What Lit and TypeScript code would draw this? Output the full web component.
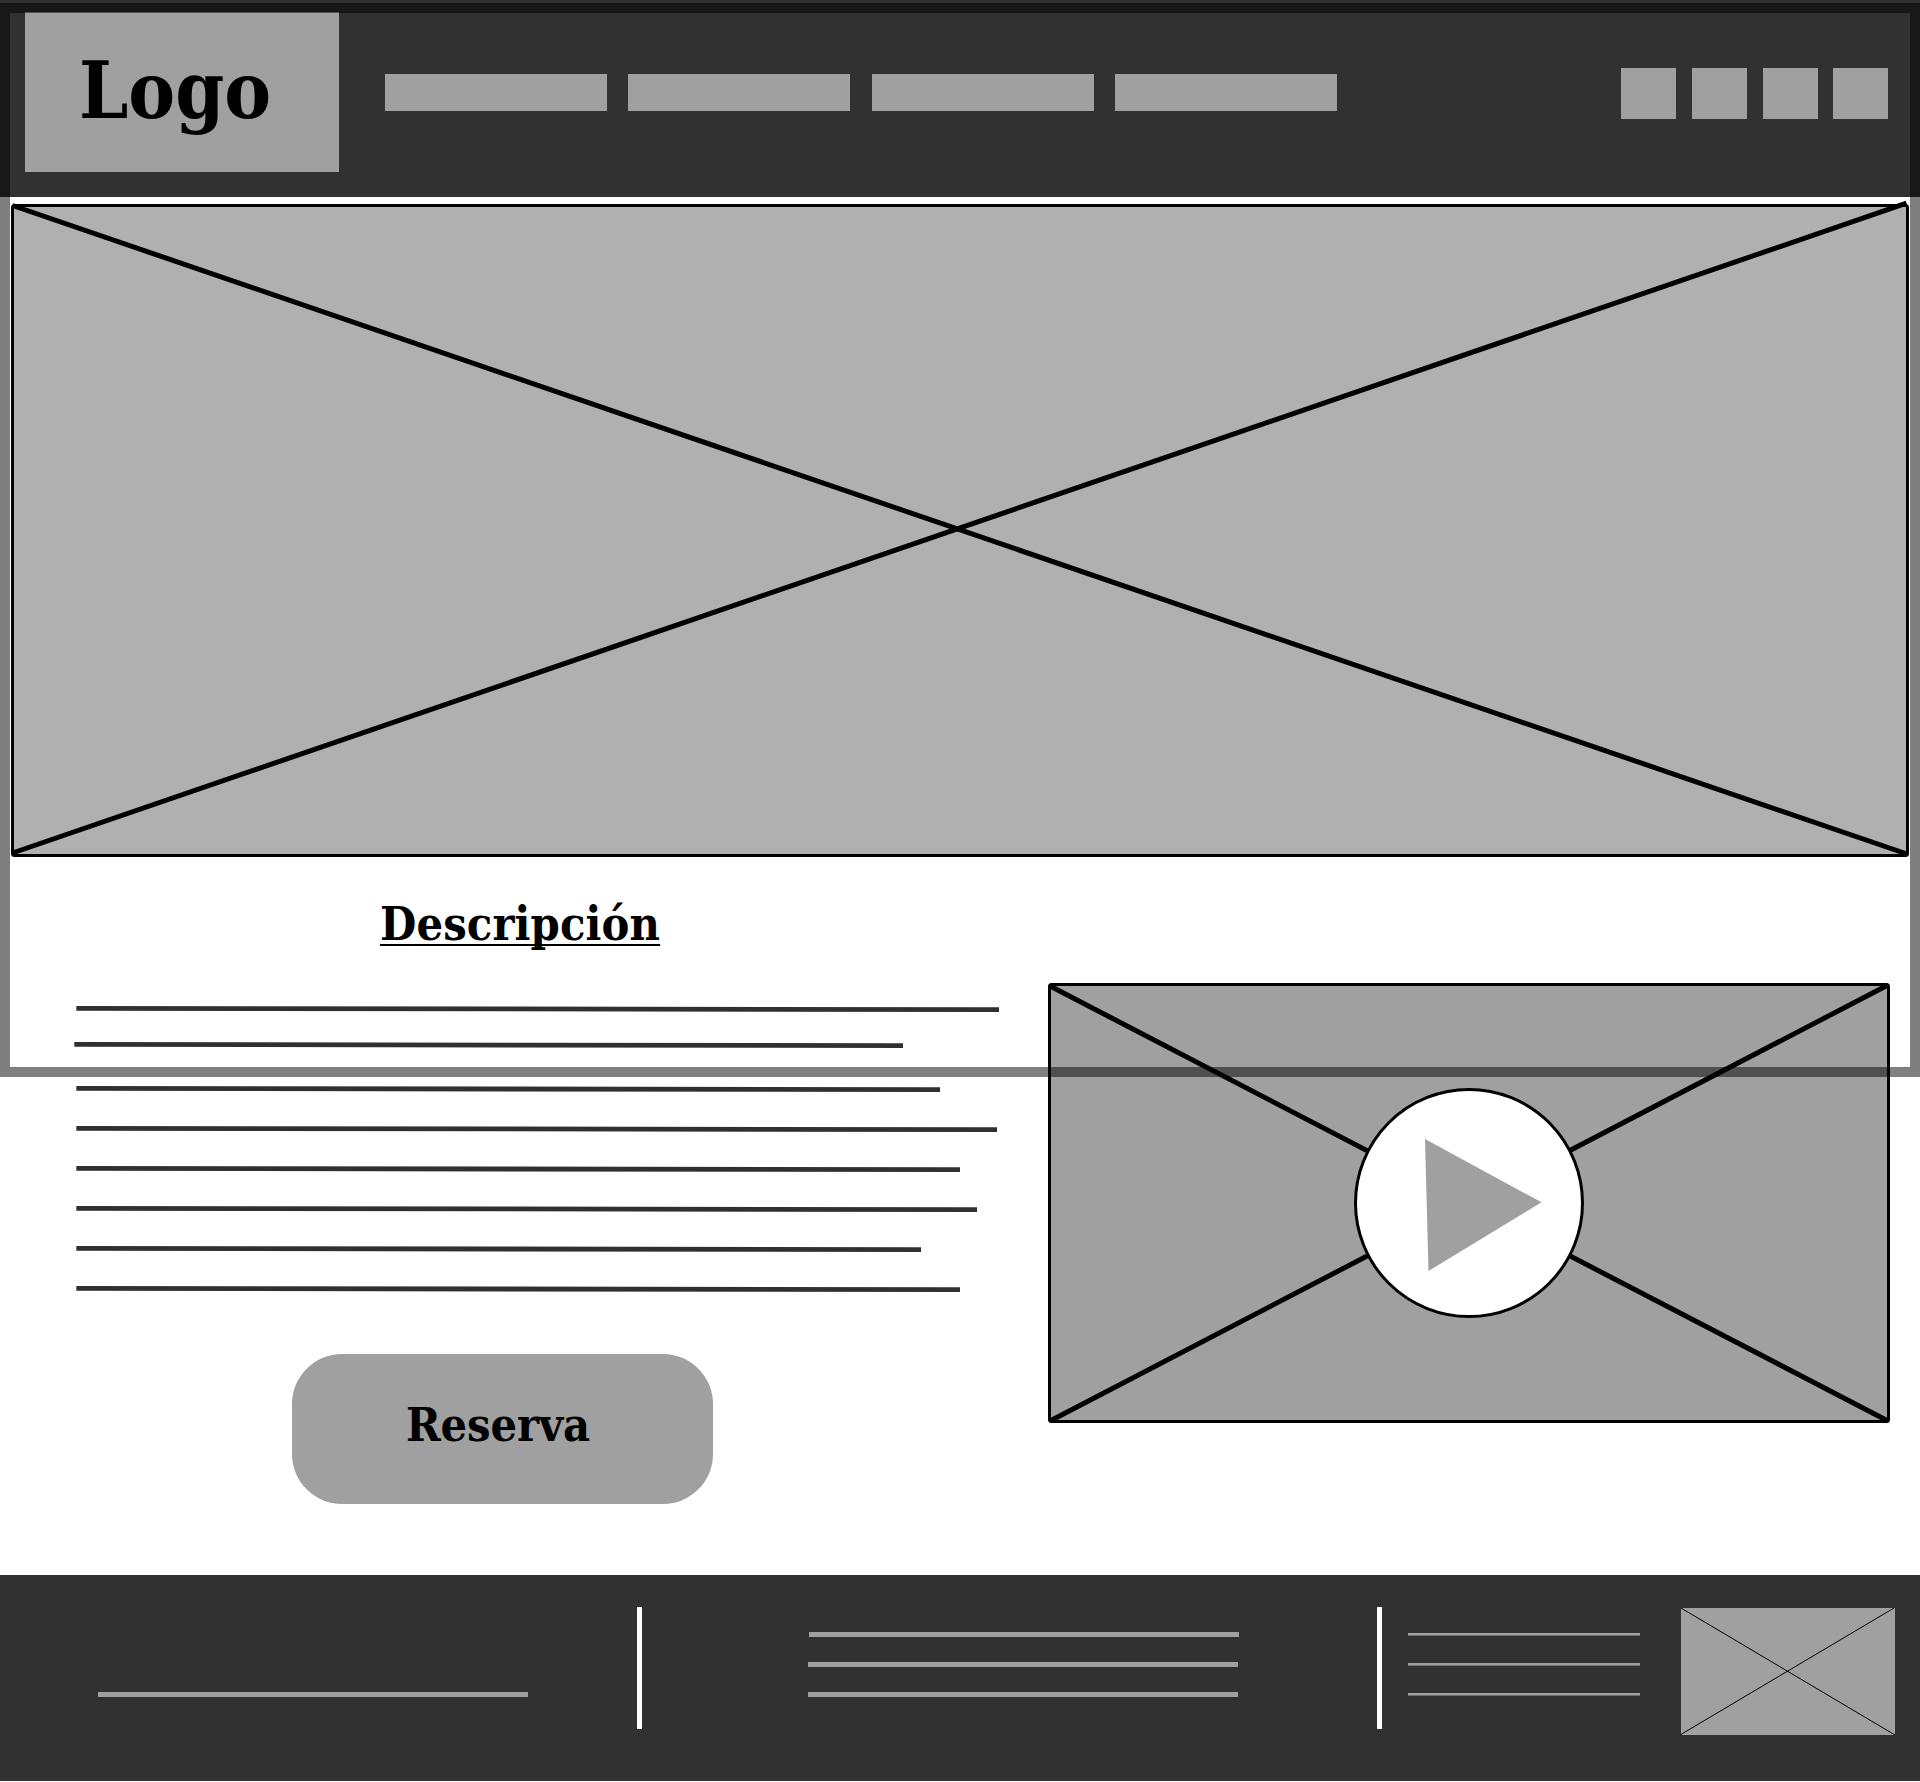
import { LitElement, html, css } from "lit";
import { customElement } from "lit/decorators.js";

const textLines = [
  { left: 76, width: 923, gap: 31 },
  { left: 74, width: 829, gap: 39 },
  { left: 76, width: 864, gap: 35 },
  { left: 76, width: 921, gap: 35 },
  { left: 76, width: 884, gap: 35 },
  { left: 76, width: 901, gap: 35 },
  { left: 76, width: 845, gap: 35 },
  { left: 76, width: 884, gap: 0 },
];

@customElement("app-root")
export class AppRoot extends LitElement {
  static styles = css`
    :host {
      display: block;
      position: relative;
      width: 1920px;
      height: 1782px;
      background: #fff;
      overflow: hidden;
      color: #000;
      font-family: "DejaVu Serif Condensed", "DejaVu Serif", serif;
      font-stretch: semi-condensed;
      font-weight: 700;
    }
    * { box-sizing: border-box; }
    svg { display: block; overflow: visible; }
    header {
      display: flex;
      height: 197px;
      padding: 12px 32px 0 25px;
      background: #313131;
    }
    .logo {
      width: 314px;
      height: 160px;
      background: #a0a0a0;
      padding: 29px 0 0 54px;
      font-size: 78px;
      line-height: 100px;
    }
    nav { display: flex; gap: 21.4px; margin: 62px 0 0 46px; }
    .link { width: 222px; height: 37px; background: #a0a0a0; }
    .socials { display: flex; gap: 16px; margin: 56px 0 0 auto; }
    .social { width: 55px; height: 51px; background: #a0a0a0; }
    .social:last-child { margin-left: -1px; }
    .hero { height: 653px; margin: 7px 0 0 11px; width: 1898px; }
    .main { display: flex; height: 718px; }
    .about { width: 1048px; }
    h1 {
      margin: 37px 0 0 380px;
      width: 281px;
      height: 60px;
      font-size: 46.5px;
      line-height: 60px;
      letter-spacing: 0.12px;
      white-space: nowrap;
      text-decoration: underline;
      text-decoration-thickness: 2px;
      text-underline-offset: 4px;
      text-decoration-skip-ink: none;
    }
    .lines { padding-top: 52px; }
    .reserve {
      display: block;
      width: 421px;
      height: 150px;
      margin: 63px 0 0 292px;
      padding: 0 0 10px 114px;
      border: 0;
      border-radius: 50px;
      background: #a0a0a0;
      color: #000;
      font: inherit;
      font-size: 46.5px;
      letter-spacing: -0.15px;
      text-align: left;
    }
    .video { margin-top: 126px; width: 842px; height: 440px; }
    footer {
      display: flex;
      align-items: flex-start;
      height: 206px;
      padding-top: 32px;
      background: #313131;
    }
    .col { display: flex; flex-direction: column; gap: 25px; width: 430px; }
    .rule { height: 5px; background: #a0a0a0; }
    .rule.top { margin-left: 1px; margin-right: -1px; }
    .first { margin: 85px 0 0 98px; }
    .second { margin: 25px 0 0 166px; }
    .third { margin: 26px 0 0 26px; width: 232px; gap: 27px; }
    .third .rule { height: 3px; border-bottom: 1px solid #707070; }
    .divider { width: 5px; height: 122px; background: #fff; }
    .d1 { margin-left: 109px; }
    .d2 { margin-left: 139px; }
    .thumb { margin: 1px 0 0 41px; }
    .frame {
      position: absolute;
      inset: 3px 0 auto 0;
      height: 1074px;
      border: 10px solid rgba(0, 0, 0, 0.5);
      pointer-events: none;
    }
  `;

  render() {
    return html`
      <header>
        <div class="logo">Logo</div>
        <nav>${[0, 1, 2, 3].map(() => html`<div class="link"></div>`)}</nav>
        <div class="socials">${[0, 1, 2, 3].map(() => html`<div class="social"></div>`)}</div>
      </header>
      <svg class="hero" viewBox="0 0 1898 653">
        <rect x="1.5" y="1.5" width="1895" height="650" rx="2" fill="#b0b0b0" stroke="#000" stroke-width="3" />
        <path d="M1.500 1.500L1896 650M1.500 649L1895.500 -0.800" stroke="#000" stroke-width="5" />
      </svg>
      <div class="main">
        <section class="about">
          <h1>Descripción</h1>
          <div class="lines">
            ${textLines.map(
              (l) => html`<svg
                width=${l.width}
                height="5"
                viewBox="0 0 ${l.width} 5"
                style="margin-left:${l.left}px;margin-bottom:${l.gap}px"
              >
                <line x1="0.3" y1="2.3" x2=${l.width} y2="3.7" stroke="#303030" stroke-width="4.8" />
              </svg>`
            )}
          </div>
          <button class="reserve">Reserva</button>
        </section>
        <svg class="video" viewBox="0 0 842 440">
          <rect x="1.5" y="1.5" width="839" height="437" rx="2" fill="#a0a0a0" stroke="#000" stroke-width="3" />
          <path d="M2 3L840 438M2 438L840 2" stroke="#000" stroke-width="5" />
          <circle cx="421" cy="220" r="113.5" fill="#fff" stroke="#000" stroke-width="3" />
          <path d="M377 156L493.500 219.300L380.500 288Z" fill="#a0a0a0" />
        </svg>
      </div>
      <footer>
        <div class="col first"><div class="rule"></div></div>
        <div class="divider d1"></div>
        <div class="col second">
          <div class="rule top"></div>
          <div class="rule"></div>
          <div class="rule"></div>
        </div>
        <div class="divider d2"></div>
        <div class="col third">
          <div class="rule"></div>
          <div class="rule"></div>
          <div class="rule"></div>
        </div>
        <svg class="thumb" width="214" height="127" viewBox="0 0 214 127">
          <rect width="214" height="127" fill="#a0a0a0" />
          <path d="M0 0L214 127M-1 127L213 0" stroke="#000" stroke-width="1" />
        </svg>
      </footer>
      <div class="frame"></div>
    `;
  }
}
